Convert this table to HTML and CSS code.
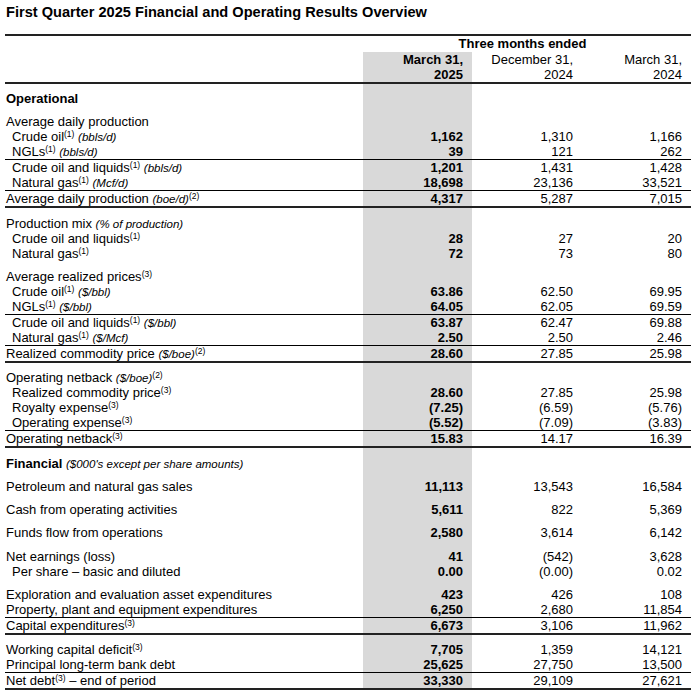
FILE: index.html
```html
<!DOCTYPE html>
<html lang="en">
<head>
<meta charset="utf-8">
<title>First Quarter 2025 Financial and Operating Results Overview</title>
<link rel="stylesheet" href="styles.css">
</head>
<body>
<div class="page">
  <h1 class="title">First Quarter 2025 Financial and Operating Results Overview</h1>
  <div class="table">
    <div class="row head1"><div></div><div class="span3">Three months ended</div></div>
    <div class="shaded">
      <div class="row head2">
        <div></div>
        <div class="v b">March 31,<br>2025</div>
        <div class="v">December 31,<br>2024</div>
        <div class="v">March 31,<br>2024</div>
      </div>

      <div class="row sec pad7"><div class="l b">Operational</div><div></div><div></div><div></div></div>

      <div class="row pad8"><div class="l">Average daily production</div><div></div><div></div><div></div></div>
      <div class="row"><div class="l in">Crude oil<sup>(1)</sup> <i>(bbls/d)</i></div><div class="v b">1,162</div><div class="v">1,310</div><div class="v">1,166</div></div>
      <div class="row"><div class="l in">NGLs<sup>(1)</sup> <i>(bbls/d)</i></div><div class="v b">39</div><div class="v">121</div><div class="v">262</div></div>
      <div class="row line"><div class="l in">Crude oil and liquids<sup>(1)</sup> <i>(bbls/d)</i></div><div class="v b">1,201</div><div class="v">1,431</div><div class="v">1,428</div></div>
      <div class="row"><div class="l in">Natural gas<sup>(1)</sup> <i>(Mcf/d)</i></div><div class="v b">18,698</div><div class="v">23,136</div><div class="v">33,521</div></div>
      <div class="row line total"><div class="l">Average daily production <i>(boe/d)</i><sup>(2)</sup></div><div class="v b">4,317</div><div class="v">5,287</div><div class="v">7,015</div></div>

      <div class="row pad8"><div class="l">Production mix <i>(% of production)</i></div><div></div><div></div><div></div></div>
      <div class="row"><div class="l in">Crude oil and liquids<sup>(1)</sup></div><div class="v b">28</div><div class="v">27</div><div class="v">20</div></div>
      <div class="row"><div class="l in">Natural gas<sup>(1)</sup></div><div class="v b">72</div><div class="v">73</div><div class="v">80</div></div>

      <div class="row pad8"><div class="l">Average realized prices<sup>(3)</sup></div><div></div><div></div><div></div></div>
      <div class="row"><div class="l in">Crude oil<sup>(1)</sup> <i>($/bbl)</i></div><div class="v b">63.86</div><div class="v">62.50</div><div class="v">69.95</div></div>
      <div class="row"><div class="l in">NGLs<sup>(1)</sup> <i>($/bbl)</i></div><div class="v b">64.05</div><div class="v">62.05</div><div class="v">69.59</div></div>
      <div class="row line"><div class="l in">Crude oil and liquids<sup>(1)</sup> <i>($/bbl)</i></div><div class="v b">63.87</div><div class="v">62.47</div><div class="v">69.88</div></div>
      <div class="row"><div class="l in">Natural gas<sup>(1)</sup> <i>($/Mcf)</i></div><div class="v b">2.50</div><div class="v">2.50</div><div class="v">2.46</div></div>
      <div class="row line total"><div class="l">Realized commodity price <i>($/boe)</i><sup>(2)</sup></div><div class="v b">28.60</div><div class="v">27.85</div><div class="v">25.98</div></div>

      <div class="row pad7"><div class="l">Operating netback <i>($/boe)</i><sup>(2)</sup></div><div></div><div></div><div></div></div>
      <div class="row"><div class="l in">Realized commodity price<sup>(3)</sup></div><div class="v b">28.60</div><div class="v">27.85</div><div class="v">25.98</div></div>
      <div class="row"><div class="l in">Royalty expense<sup>(3)</sup></div><div class="v b">(7.25)</div><div class="v">(6.59)</div><div class="v">(5.76)</div></div>
      <div class="row"><div class="l in">Operating expense<sup>(3)</sup></div><div class="v b">(5.52)</div><div class="v">(7.09)</div><div class="v">(3.83)</div></div>
      <div class="row line total"><div class="l">Operating netback<sup>(3)</sup></div><div class="v b">15.83</div><div class="v">14.17</div><div class="v">16.39</div></div>

      <div class="row pad8"><div class="l"><b>Financial</b> <i>($000's except per share amounts)</i></div><div></div><div></div><div></div></div>

      <div class="row pad8"><div class="l">Petroleum and natural gas sales</div><div class="v b">11,113</div><div class="v">13,543</div><div class="v">16,584</div></div>
      <div class="row pad8"><div class="l">Cash from operating activities</div><div class="v b">5,611</div><div class="v">822</div><div class="v">5,369</div></div>
      <div class="row pad8"><div class="l">Funds flow from operations</div><div class="v b">2,580</div><div class="v">3,614</div><div class="v">6,142</div></div>
      <div class="row pad9"><div class="l">Net earnings (loss)</div><div class="v b">41</div><div class="v">(542)</div><div class="v">3,628</div></div>
      <div class="row"><div class="l in">Per share – basic and diluted</div><div class="v b">0.00</div><div class="v">(0.00)</div><div class="v">0.02</div></div>

      <div class="row pad8"><div class="l">Exploration and evaluation asset expenditures</div><div class="v b">423</div><div class="v">426</div><div class="v">108</div></div>
      <div class="row"><div class="l">Property, plant and equipment expenditures</div><div class="v b">6,250</div><div class="v">2,680</div><div class="v">11,854</div></div>
      <div class="row line total"><div class="l">Capital expenditures<sup>(3)</sup></div><div class="v b">6,673</div><div class="v">3,106</div><div class="v">11,962</div></div>

      <div class="row pad7"><div class="l">Working capital deficit<sup>(3)</sup></div><div class="v b">7,705</div><div class="v">1,359</div><div class="v">14,121</div></div>
      <div class="row"><div class="l">Principal long-term bank debt</div><div class="v b">25,625</div><div class="v">27,750</div><div class="v">13,500</div></div>
      <div class="row line total"><div class="l">Net debt<sup>(3)</sup> – end of period</div><div class="v b">33,330</div><div class="v">29,109</div><div class="v">27,621</div></div>
    </div>
  </div>
</div>
</body>
</html>
```

FILE: styles.css
```css
html, body {
  margin: 0;
  padding: 0;
  background: #ffffff;
}

body {
  font-family: "Liberation Sans", Arial, sans-serif;
  font-size: 13px;
  color: #000;
}

.page {
  width: 686px;
  padding: 0 5px;
}

.title {
  margin: 0;
  height: 34px;
  box-sizing: border-box;
  padding: 4px 0 0 1px;
  font-size: 14.6px;
  line-height: 16px;
  font-weight: bold;
}

.table {
  border-top: 2px solid #222;
}

.shaded {
  background: linear-gradient(to right,
    transparent 0, transparent 358px,
    #d9d9d9 358px, #d9d9d9 467px,
    transparent 467px);
}

.row {
  display: grid;
  grid-template-columns: 358px 109px 110px 109px;
  grid-template-rows: 15px;
  line-height: 15px;
  white-space: nowrap;
}

.row > div {
  height: 15px;
  overflow: visible;
}

.head1 {
  grid-template-rows: 16px;
  line-height: 16px;
  font-weight: bold;
}

.head1 > div {
  height: 16px;
}

.span3 {
  grid-column: 2 / 5;
  text-align: center;
  padding-right: 9px;
}

.head2 {
  grid-template-rows: 30px;
  border-bottom: 2px solid #222;
}

.head2 > div {
  height: 30px;
}

.v {
  text-align: right;
  padding-right: 9px;
}

.b { font-weight: bold; }

.l {
  padding-left: 1px;
}

.l.in {
  padding-left: 7px;
}

.pad7 { padding-top: 7px; }
.pad8 { padding-top: 8px; }
.pad9 { padding-top: 9px; }

.line { border-top: 1px solid #000; }
.total { border-bottom: 2px solid #222; }

.l i {
  font-size: 11.5px;
  line-height: 1;
}

.l b {
  font-weight: bold;
}

sup {
  font-size: 8.5px;
  line-height: 1;
  vertical-align: 4px;
}
```
